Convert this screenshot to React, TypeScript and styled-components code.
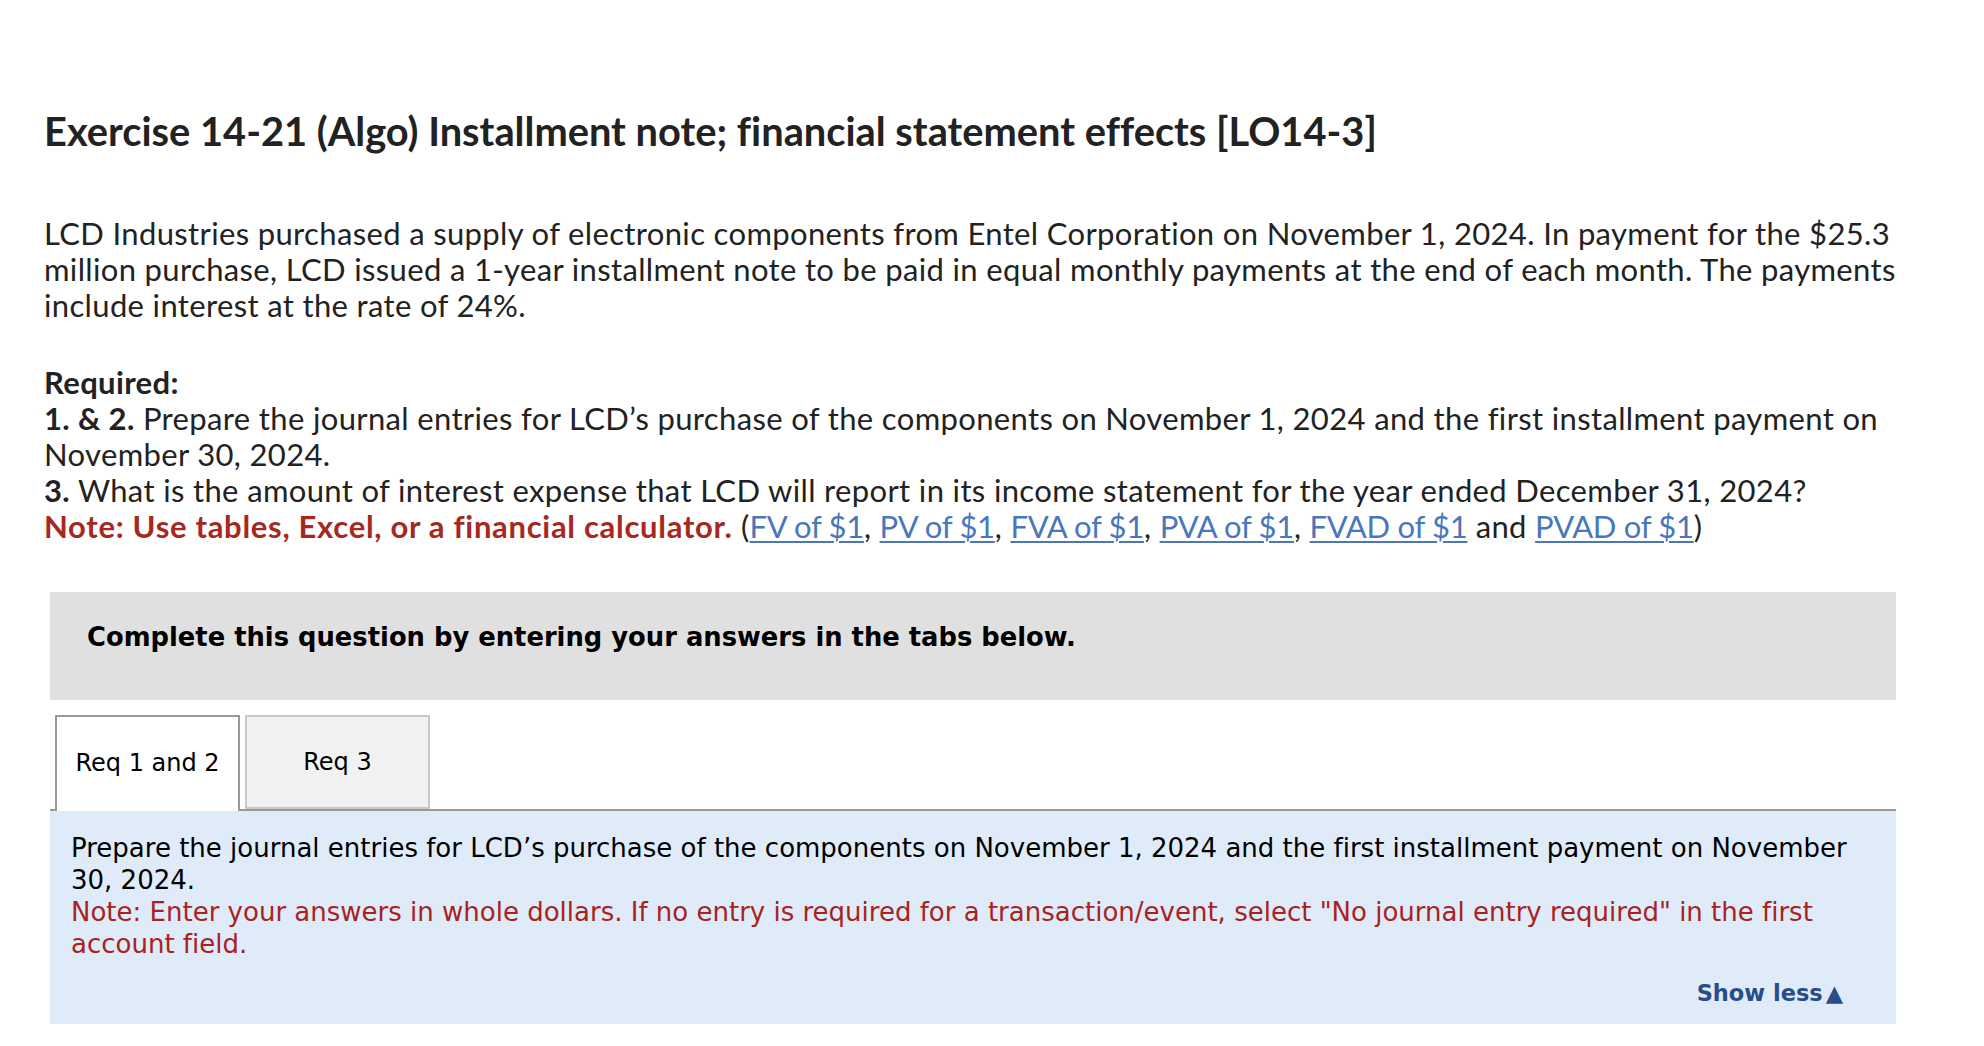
import React from "react";
import styled, { createGlobalStyle } from "styled-components";

const Global = createGlobalStyle`
  html, body { margin: 0; padding: 0; background: #ffffff; }
  body {
    font-family: "Lato", "Noto Sans", sans-serif;
    color: #222222;
    font-variant-ligatures: none;
  }
`;

const Page = styled.main`
  padding: 108px 44px 0 44px;
`;

const Title = styled.h1`
  margin: 0;
  font-family: "Lato", "Noto Sans", sans-serif;
  font-weight: 700;
  font-size: 39.8px;
  line-height: 45px;
  color: #222222;
`;

const Para = styled.p<{ $top: number }>`
  margin: ${(p) => p.$top}px 0 0 0;
  font-size: 31px;
  letter-spacing: 0.35px;
  line-height: 36px;
  color: #222222;
`;

const Strong = styled.strong`
  font-weight: 700;
`;

const RedNote = styled.strong`
  font-weight: 700;
  letter-spacing: 0.7px;
  color: #a6281e;
`;

const Link = styled.a`
  color: #4a76bb;
  letter-spacing: -0.3px;
  text-decoration: underline;
  text-underline-offset: 3px;
  text-decoration-thickness: 2px;
`;

const Verdana = `"DejaVu Sans", Verdana, sans-serif`;

const Instruction = styled.div`
  margin: 48px 88px 0 50px;
  background: #e0e0e0;
  padding: 30px 37px 48px 37px;
  font-family: ${Verdana};
  font-weight: 700;
  font-size: 25.8px;
  line-height: 30px;
  color: #000000;
`;

const TabBar = styled.div`
  margin: 15px 88px 0 50px;
  padding-left: 5px;
  display: flex;
  gap: 5px;
  border-bottom: 2px solid #999999;
  height: 94px;
`;

const Tab = styled.button<{ $active?: boolean }>`
  width: 185px;
  height: ${(p) => (p.$active ? "96px" : "94px")};
  box-sizing: border-box;
  border: 2px solid ${(p) => (p.$active ? "#999999" : "#c8c8c8")};
  border-bottom: ${(p) => (p.$active ? "none" : "2px solid #c8c8c8")};
  background: ${(p) => (p.$active ? "#ffffff" : "#f2f2f2")};
  display: flex;
  align-items: center;
  justify-content: center;
  padding: 0 0 ${(p) => (p.$active ? "2px" : "0")} 0;
  font-family: ${Verdana};
  font-size: 24px;
  color: #000000;
  cursor: pointer;
  position: relative;
  z-index: 1;
`;

const Panel = styled.section`
  margin: 0 88px 0 50px;
  background: #dfebf8;
  padding: 21px 16px 17px 21px;
  font-family: ${Verdana};
  font-size: 26px;
  line-height: 32px;
  color: #000000;
`;

const PanelNote = styled.span`
  color: #a8231e;
`;

const ShowLess = styled.div`
  margin-top: 19px;
  padding-right: 37px;
  display: flex;
  justify-content: flex-end;
  align-items: baseline;
  gap: 3px;
  font-weight: 700;
  font-size: 22.5px;
  line-height: 28px;
  color: #284d8a;
`;

export default function App() {
  return (
    <>
      <Global />
      <Page>
        <Title>
          Exercise 14-21 (Algo) Installment note; financial statement effects [LO14-3]
        </Title>
        <Para $top={62}>
          LCD Industries purchased a supply of electronic components from Entel Corporation on
          November 1, 2024. In payment for the $25.3 million purchase, LCD issued a 1-year
          installment note to be paid in equal monthly payments at the end of each month. The
          payments include interest at the rate of 24%.
        </Para>
        <Para $top={41}>
          <Strong>Required:</Strong>
          <br />
          <Strong>1. &amp; 2.</Strong> Prepare the journal entries for LCD’s purchase of the
          components on November 1, 2024 and the first installment payment on November 30, 2024.
          <br />
          <Strong>3.</Strong> What is the amount of interest expense that LCD will report in its
          income statement for the year ended December 31, 2024?
          <br />
          <RedNote>Note: Use tables, Excel, or a financial calculator.</RedNote> (
          <Link href="#">FV of $1</Link>, <Link href="#">PV of $1</Link>,{" "}
          <Link href="#">FVA of $1</Link>, <Link href="#">PVA of $1</Link>,{" "}
          <Link href="#">FVAD of $1</Link> and <Link href="#">PVAD of $1</Link>)
        </Para>
      </Page>
      <Instruction>Complete this question by entering your answers in the tabs below.</Instruction>
      <TabBar>
        <Tab $active>Req 1 and 2</Tab>
        <Tab>Req 3</Tab>
      </TabBar>
      <Panel>
        Prepare the journal entries for LCD’s purchase of the components on November 1, 2024 and
        the first installment payment on November 30, 2024.
        <br />
        <PanelNote>
          Note: Enter your answers in whole dollars. If no entry is required for a
          transaction/event, select "No journal entry required" in the first account field.
        </PanelNote>
        <ShowLess>
          <span>Show less</span>
          <span>▲</span>
        </ShowLess>
      </Panel>
    </>
  );
}
